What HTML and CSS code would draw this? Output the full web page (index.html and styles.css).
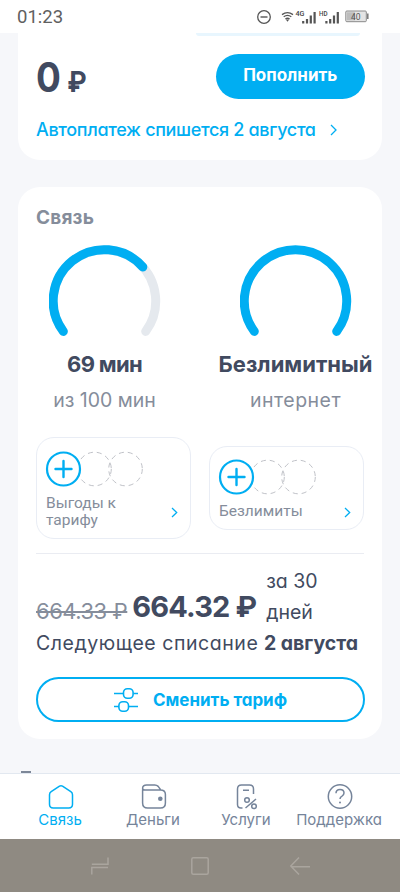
FILE: index.html
```html
<!DOCTYPE html>
<html lang="ru">
<head>
<meta charset="utf-8">
<meta name="viewport" content="width=device-width, initial-scale=1">
<title>Связь</title>
<link rel="stylesheet" href="styles.css">
</head>
<body>
<div class="phone">
  <header class="status">
    <span class="clock">01:23</span>
    <svg class="status-icons" width="114" height="20" viewBox="256 7 114 20" fill="none">
      <circle cx="264" cy="17" r="6.3" stroke="#555" stroke-width="1.3"/>
      <path d="M260.5 17h7" stroke="#555" stroke-width="1.4"/>
      <path d="M282 14.600q5.500-4 11 0M283.700 16.800q3.800-2.800 7.600 0M285.400 19q2.100-1.500 4.200 0" stroke="#555" stroke-width="1.3"/>
      <path d="M285.800 19.600h3.400l-1.700 2.200z" fill="#555"/>
      <text class="net" x="295.500" y="15.500" textLength="9" lengthAdjust="spacingAndGlyphs">4G</text>
      <path d="M303.200 21v2.500M307 19v4.500M310.800 15.500v8M314.600 12v11.500" stroke="#555" stroke-width="2.200"/>
      <text class="net" x="319" y="15.500" textLength="8.500" lengthAdjust="spacingAndGlyphs">HD</text>
      <path d="M326.400 21v2.500M330.200 19v4.500M334 15.500v8M337.800 12v11.500" stroke="#555" stroke-width="2.200"/>
      <rect x="345.800" y="11" width="20.500" height="10.700" rx="1" fill="#e4e4e4" stroke="#8a8a8a"/>
      <rect x="347" y="12.300" width="8" height="8" fill="#bdbdbd"/>
      <path d="M367.800 13.500v5.500" stroke="#777" stroke-width="1.500"/>
      <text class="charge" x="351" y="19.700">40</text>
    </svg>
  </header>

  <main class="content">
    <section class="card balance">
      <div class="strip"></div>
      <div class="balance-row">
        <div class="amount"><span class="zero">0</span><span class="rub">₽</span></div>
        <button class="topup">Пополнить</button>
      </div>
      <a class="autopay"><span>Автоплатеж спишется 2 августа</span>
        <svg width="7" height="12" viewBox="0 0 7 12"><path d="M1 1l5 5-5 5" fill="none" stroke="currentColor" stroke-width="1.300"/></svg>
      </a>
    </section>

    <section class="card plan">
      <h2 class="title">Связь</h2>
      <div class="gauges">
        <div class="gauge">
          <svg width="112" height="92" viewBox="-55.500 -56 112 92" fill="none" stroke-width="9" stroke-linecap="round">
            <path d="M-41.200 30.400A51.200 51.200 0 1 1 41.200 30.400" stroke="#e5e9ee"/>
            <path d="M-41.200 30.400A51.200 51.200 0 0 1 38.300 -34" stroke="#00aef2"/>
          </svg>
          <strong class="value minutes">69 мин</strong>
          <span class="note">из 100 мин</span>
        </div>
        <div class="gauge">
          <svg width="112" height="92" viewBox="-55.500 -56 112 92" fill="none" stroke-width="9" stroke-linecap="round">
            <path d="M-41.200 30.400A51.200 51.200 0 1 1 41.200 30.400" stroke="#00aef2"/>
          </svg>
          <strong class="value">Безлимитный</strong>
          <span class="note net-note">интернет</span>
        </div>
      </div>

      <div class="options">
        <div class="option">
          <svg class="rings" width="100" height="38" viewBox="0 0 100 38" fill="none">
            <g stroke="#c0c2c8" stroke-dasharray="5 4"><circle cx="49.500" cy="19" r="16.800"/><circle cx="80.500" cy="19" r="16.800"/></g>
            <circle cx="18.500" cy="19" r="16.500" fill="#fff" stroke="#00aef2" stroke-width="2.200"/>
            <path d="M10.500 19h16M18.500 11v16" stroke="#00aef2" stroke-width="2.400" stroke-linecap="round"/>
          </svg>
          <div class="option-row"><span>Выгоды к<br>тарифу</span>
            <svg width="7" height="11" viewBox="0 0 7 11"><path d="M1 1l4.700 4.500L1 10" fill="none" stroke="#00aef2" stroke-width="1.300"/></svg>
          </div>
        </div>
        <div class="option single">
          <svg class="rings" width="100" height="38" viewBox="0 0 100 38" fill="none">
            <g stroke="#c0c2c8" stroke-dasharray="5 4"><circle cx="49.500" cy="19" r="16.800"/><circle cx="80.500" cy="19" r="16.800"/></g>
            <circle cx="18.500" cy="19" r="16.500" fill="#fff" stroke="#00aef2" stroke-width="2.200"/>
            <path d="M10.500 19h16M18.500 11v16" stroke="#00aef2" stroke-width="2.400" stroke-linecap="round"/>
          </svg>
          <div class="option-row"><span>Безлимиты</span>
            <svg width="7" height="11" viewBox="0 0 7 11"><path d="M1 1l4.700 4.500L1 10" fill="none" stroke="#00aef2" stroke-width="1.300"/></svg>
          </div>
        </div>
      </div>

      <div class="price">
        <s class="old">664.33 ₽</s>
        <strong class="new">664.32 ₽</strong>
        <span class="period">за 30<br>дней</span>
      </div>
      <p class="next"><span class="next-label">Следующее списание</span><b>2 августа</b></p>
      <button class="change">
        <svg width="24" height="26" viewBox="0 0 24 26" fill="none" stroke="currentColor" stroke-width="1.600">
          <path d="M0 6.500h9.500M19.500 6.500H24M0 19.500h5M15 19.500h9"/>
          <rect x="9.500" y="1.700" width="9.600" height="9.600" rx="3.800"/><rect x="4.900" y="14.700" width="9.600" height="9.600" rx="3.800"/>
        </svg>
        <span>Сменить тариф</span>
      </button>
    </section>
    <div class="peek"></div>
  </main>

  <nav class="tabs">
    <a class="tab active">
      <svg width="28" height="28" viewBox="0 0 28 28" fill="none" stroke="currentColor" stroke-width="1.500" stroke-linejoin="round"><path d="M12.500 3.200q1.500-1 3 0l8.300 5.500q1.700 1.100 1.700 3v9.600q0 3.700-3.700 3.700H6.200q-3.700 0-3.700-3.700v-9.600q0-1.900 1.700-3z"/></svg>
      <span>Связь</span>
    </a>
    <a class="tab">
      <svg width="28" height="28" viewBox="0 0 28 28" fill="none" stroke="currentColor" stroke-width="1.500"><path d="M2.600 6.500V20q0 5 5 5h12.800q5 0 5-5v-8.500q0-4.500-5-4.500H5q-2.400 0-2.400-1.800 0-3.200 4-3.200h8.200q2 0 3.400 1.400L21 7.200"/><circle cx="20.300" cy="15.700" r="2.300" fill="currentColor" stroke="none"/></svg>
      <span>Деньги</span>
    </a>
    <a class="tab">
      <svg width="28" height="28" viewBox="0 0 28 28" fill="none" stroke="currentColor" stroke-width="1.500"><path d="M9.500 25H8q-3.500 0-3.500-3.500V6q0-4 4-4h8q4 0 4 4v5M10 7.200h6M23 16 12.500 25"/><circle cx="14" cy="17" r="2.300"/><circle cx="21" cy="23.300" r="2.300"/></svg>
      <span>Услуги</span>
    </a>
    <a class="tab">
      <svg width="28" height="28" viewBox="0 0 28 28" fill="none" stroke="currentColor" stroke-width="1.500"><circle cx="14" cy="13.500" r="11.700"/><path d="M10 10.300q0-3.800 4-3.800t4 3.600q0 1.900-2 3-2 1-2 3"/><circle cx="14" cy="19.500" r="1" fill="currentColor" stroke="none"/></svg>
      <span>Поддержка</span>
    </a>
  </nav>

  <footer class="system">
    <svg width="18" height="18" viewBox="0 0 18 18"><path d="M.8 7.200H17V.5M17 10.600H.8V17.500" /></svg>
    <svg width="18" height="18" viewBox="0 0 18 18"><rect x=".8" y=".8" width="16.400" height="16.400" rx="1.500"/></svg>
    <svg width="20" height="18" viewBox="0 0 20 18"><path d="M9 .5.800 9 9 17.500M.8 9.800H20"/></svg>
  </footer>
</div>
</body>
</html>
```

FILE: styles.css
```css
* { box-sizing: border-box; }
body { margin: 0; font-family: Inter, "Open Sans", sans-serif; font-feature-settings: "cv11"; color: #414a60; }
button { font: inherit; font-feature-settings: inherit; padding: 0; }
svg { display: block; flex: none; }
.phone { width: 400px; height: 892px; display: flex; flex-direction: column; overflow: hidden; background: #f6f7fa; }

.status { height: 33px; flex: none; display: flex; justify-content: space-between; padding: 7px 30px 0 17px; background: #fff; }
.clock { font: 18.500px/21px Roboto, sans-serif; color: #606060; }
.net { font: 500 8px Roboto, sans-serif; fill: #444; }
.charge { font: 8.500px Roboto, sans-serif; fill: #555; }

.content { height: 740px; flex: none; padding: 0 18px; overflow: hidden; }
.card { background: #fff; padding: 0 18px; }
.balance { height: 127px; border-radius: 0 0 22px 22px; }
.strip { height: 3px; width: 164px; margin-left: 160px; background: #e8f6fe; border-radius: 0 0 10px 10px; }
.balance-row { display: flex; justify-content: space-between; align-items: center; padding-top: 18px; height: 63px; margin-right: -.5px; }
.amount { display: flex; align-items: baseline; gap: 7px; font-weight: 700; line-height: 44px; padding-top: 5px; transform: scaleX(.9); transform-origin: left; }
.zero { font-size: 41px; }
.rub { font-size: 29px; }
.topup { width: 148.500px; height: 45px; border: 0; border-radius: 23px; background: #00aef2; color: #fff; font-size: 17px; font-weight: 700; line-height: 42px; padding-bottom: 3px; }
.autopay { display: flex; align-items: center; gap: 14px; margin-top: 20px; font-size: 18px; line-height: 21px; font-weight: 500; letter-spacing: -.33px; color: #00aef2; white-space: nowrap; }

.plan { margin-top: 27px; height: 552px; padding-top: 21px; border-radius: 22px; }
.title { margin: 0; font-size: 19px; line-height: 20px; font-weight: 700; letter-spacing: .2px; color: #858d9b; }
.gauges { display: grid; grid-template-columns: 137px 153px; gap: 46px; margin-top: 17px; }
.gauge { display: flex; flex-direction: column; align-items: center; white-space: nowrap; }
.value { margin-top: 13px; font-size: 22px; line-height: 28px; }
.minutes { letter-spacing: -.7px; }
.note { margin-top: 8px; font-size: 19.500px; line-height: 28px; color: #858d9b; }
.net-note { letter-spacing: .5px; }
.options { display: grid; grid-template-columns: 155px 155px; gap: 18px; align-items: center; margin-top: 22px; height: 103px; }
.option { border: 1px solid #e9edf5; border-radius: 18px; padding: 12px 12px 8px 8px; }
.single { margin-top: 1px; padding-top: 11px; }
.option-row { display: flex; justify-content: space-between; align-items: center; padding: 7px 0 0 1px; font: 15.500px/17.500px Roboto, sans-serif; color: #858d9b; }
.price { display: flex; align-items: center; border-top: 1px solid #eaecf2; margin-top: 14px; padding-top: 12px; white-space: nowrap; }
.old { font-size: 22px; line-height: 28px; padding-top: 28px; letter-spacing: -.5px; color: #858d9b; }
.new { font-size: 29px; line-height: 36px; padding-top: 19px; margin-left: 5px; letter-spacing: -.85px; }
.period { margin-left: 10px; font-size: 19.500px; line-height: 31px; }
.next { display: flex; gap: 5.500px; margin: 3px 0 0; font-size: 19.500px; line-height: 24px; white-space: nowrap; }
.next-label { letter-spacing: .55px; }
.change { display: flex; align-items: center; justify-content: center; gap: 15px; width: 329px; height: 45px; margin-top: 22px; border: 2px solid #00aef2; border-radius: 23px; background: #fff; color: #00aef2; font-size: 17px; font-weight: 700; }
.peek { width: 10px; height: 2px; margin: 32px 0 0 3px; background: #7d8798; }

.tabs { height: 66px; flex: none; display: grid; grid-template-columns: 120px 66px 120px 66px; border-top: 1px solid #e2e8f0; background: #fff; }
.tab { display: flex; flex-direction: column; align-items: center; padding-top: 9px; font-size: 15px; line-height: 18px; color: #75849a; white-space: nowrap; }
.tab svg { margin-left: 1px; }
.active { color: #00aef2; }
.system { flex: 1; display: flex; align-items: flex-start; justify-content: space-between; padding: 18px 90px 0 91px; background: #8f8a82; }
.system svg { fill: none; stroke: #aaa59e; stroke-width: 1.500; }
```
